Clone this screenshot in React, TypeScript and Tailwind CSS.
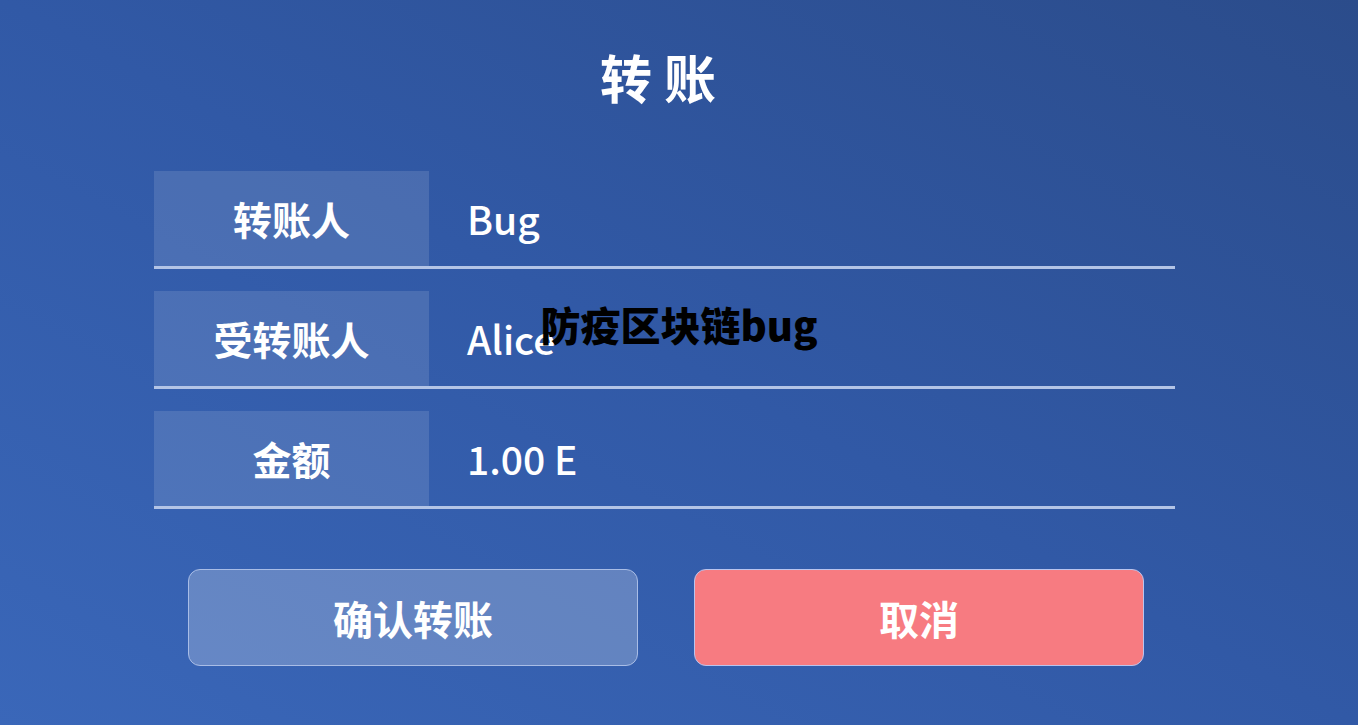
import React from "react"

const rows = [
  { label: "转账人", value: "Bug" },
  { label: "受转账人", value: "Alice" },
  { label: "金额", value: "1.00 E" },
]

export default function App() {
  return (
    <div
      className="relative w-full h-[725px] overflow-hidden bg-gradient-to-tr from-[#3a67b9] via-[#3159a6] to-[#2b4c8b] text-white"
      style={{ fontFamily: '"Noto Sans CJK SC", "Noto Sans", sans-serif' }}
    >
      {/* Title */}
      <div className="h-[160px] flex items-center justify-center pb-[6px] pr-[42px]">
        <h1 className="text-[52px] leading-none font-bold">转 账</h1>
      </div>

      {/* Form rows */}
      <div className="ml-[154px] w-[1021px] mt-[11px] flex flex-col gap-[22px]">
        {rows.map((r) => (
          <div key={r.label} className="flex h-[98px] border-b-[3px] border-[#b3c4e6]">
            <div className="w-[275px] h-[95px] bg-white/12 flex items-center justify-center text-[39px] font-bold">
              {r.label}
            </div>
            <div className="flex-1 flex items-center pl-[38px] text-[39px] font-medium">
              {r.value}
            </div>
          </div>
        ))}
      </div>

      {/* Buttons */}
      <div className="ml-[188px] mt-[60px] flex gap-[56px]">
        <button className="w-[450px] h-[97px] rounded-xl border border-[#a9bde6] bg-white/23 text-[40px] font-bold text-white">
          确认转账
        </button>
        <button className="w-[450px] h-[97px] rounded-xl border border-[#b9c4ee] bg-[#f77b81] text-[40px] font-bold text-white">
          取消
        </button>
      </div>

      {/* Watermark overlay */}
      <div className="absolute left-1/2 top-[294px] -translate-x-1/2 text-black text-[40px] font-black whitespace-nowrap">
        防疫区块链bug
      </div>
    </div>
  )
}
